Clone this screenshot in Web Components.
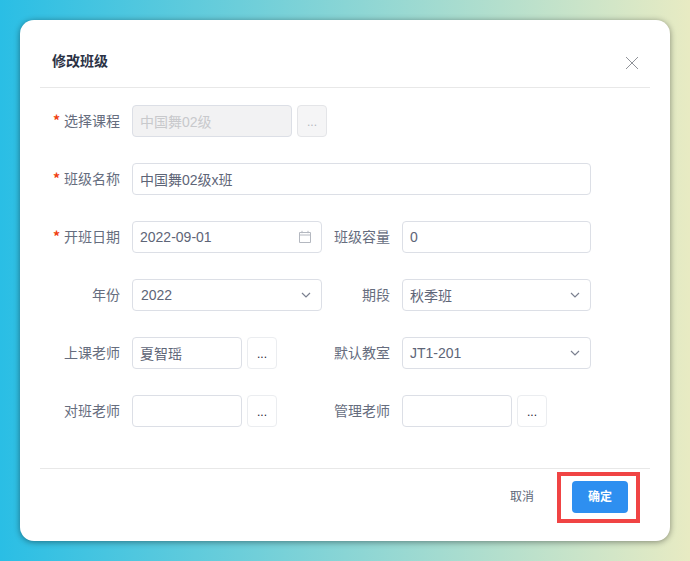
<!DOCTYPE html>
<html lang="zh"><head><meta charset="utf-8"><style>
html,body{margin:0;height:100%}
body{font-family:"Liberation Sans","Noto Sans CJK SC",sans-serif}
</style></head><body>
<x-app>
<x-dialog heading="修改班级">
  <x-row wide>
    <x-field label="选择课程" required><x-input value="中国舞02级" disabled w="160"></x-input><x-more disabled></x-more></x-field>
  </x-row>
  <x-row wide>
    <x-field label="班级名称" required><x-input value="中国舞02级x班" w="459"></x-input></x-field>
  </x-row>
  <x-row>
    <x-field label="开班日期" required><x-input value="2022-09-01" w="190" icon="date"></x-input></x-field>
    <x-field label="班级容量"><x-input value="0" w="189"></x-input></x-field>
  </x-row>
  <x-row>
    <x-field label="年份"><x-input value="2022" w="190" icon="down" select></x-input></x-field>
    <x-field label="期段"><x-input value="秋季班" w="189" icon="down"></x-input></x-field>
  </x-row>
  <x-row>
    <x-field label="上课老师"><x-input value="夏智瑶" w="110"></x-input><x-more></x-more></x-field>
    <x-field label="默认教室"><x-input value="JT1-201" w="189" icon="down"></x-input></x-field>
  </x-row>
  <x-row>
    <x-field label="对班老师"><x-input value="" w="110"></x-input><x-more></x-more></x-field>
    <x-field label="管理老师"><x-input value="" w="110"></x-input><x-more></x-more></x-field>
  </x-row>
  <x-action slot="footer" label="取消"></x-action>
  <x-action slot="footer" label="确定" primary highlight></x-action>
</x-dialog>
</x-app>
<script>
function def(name, css, html){
  customElements.define(name, class extends HTMLElement{
    connectedCallback(){
      if(this.shadowRoot) return;
      const r=this.attachShadow({mode:'open'});
      r.innerHTML='<style>'+css+'</style>'+(typeof html==='function'?html(this):html);
    }
  });
}
const esc=s=>(s||'').replace(/&/g,'&amp;').replace(/</g,'&lt;');
def('x-app',`:host{display:block;box-sizing:border-box;width:690px;height:561px;padding:20px;background:linear-gradient(90deg,#2abee5 0%,#89d5d5 50%,#e8ebc3 100%)}`,'<slot></slot>');
def('x-dialog',`
:host{display:flex;flex-direction:column;box-sizing:border-box;width:650px;height:521px;background:#fff;border-radius:14px;padding:0 20px;box-shadow:0 1px 6px rgba(0,0,0,.42)}
header{box-sizing:border-box;height:68px;border-bottom:1px solid #e8e8e8;display:flex;align-items:center;justify-content:space-between;padding:14px 11px 0 12px}
h2{margin:0;font-size:14px;font-weight:700;color:#2b3245;line-height:20px}
svg{display:block;position:relative;top:2px}
main{flex:1;display:flex;flex-direction:column;gap:26px;padding-top:17px}
footer{box-sizing:border-box;height:73px;border-top:1px solid #e8e8e8;display:flex;align-items:flex-start;justify-content:flex-end;padding:12px 22px 0 0;gap:38px}
`,t=>`<header><h2>${esc(t.getAttribute('heading'))}</h2><svg width="14" height="14" viewBox="0 0 14 14" fill="none" stroke="#909399" stroke-width="1"><path d="M1 1l12 12M13 1L1 13"/></svg></header><main><slot></slot></main><footer><slot name="footer"></slot></footer>`);
def('x-row',`:host{display:grid;grid-template-columns:270px 1fr;column-gap:0;height:32px}:host([wide]){grid-template-columns:1fr}`,'<slot></slot>');
def('x-field',`
:host{display:flex;align-items:center;height:32px}
label{flex:none;width:80px;margin-right:12px;text-align:right;font-size:14px;color:#666d7e;white-space:nowrap;line-height:32px}
i{font-style:normal;font-weight:700;line-height:0;color:#f0400f;margin-right:4px;font-family:"Noto Sans CJK SC",sans-serif}
.b{display:flex;gap:5px}
`,t=>`<label>${t.hasAttribute('required')?'<i>*</i>':''}${esc(t.getAttribute('label'))}</label><div class="b"><slot></slot></div>`);
def('x-input',`
:host{display:flex;align-items:center;justify-content:space-between;box-sizing:border-box;height:32px;border:1px solid #dcdfe6;border-radius:4px;background:#fff;padding:0 9px 0 7px;font-size:14px;color:#5e6577;white-space:nowrap}
:host([select]){padding-left:8px}
:host([disabled]){background:#f2f2f3;color:#c8c9cc}
svg{flex:none;display:block}
`,t=>{
  t.style.width=t.getAttribute('w')+'px';
  const ic=t.getAttribute('icon');
  let s='';
  if(ic==='date') s='<svg width="14" height="14" viewBox="0 0 14 14" fill="none" stroke="#b4b8c0"><path d="M1.500 2.500h11v10h-11zM1.500 5h11M4 .8v2.400M10 .8v2.400"/></svg>';
  if(ic==='down') s='<svg width="12" height="12" viewBox="0 0 12 12" fill="none" stroke="#7b8090" stroke-width="1.200"><path d="M2 4l4 4 4-4"/></svg>';
  return `<span>${esc(t.getAttribute('value'))}</span>${s}`;
});
def('x-more',`
:host{display:flex;align-items:center;justify-content:center;box-sizing:border-box;width:30px;height:32px;border:1px solid #ebedf0;border-radius:4px;background:#fff;font-size:12px;color:#1f2637;line-height:1}
:host([disabled]){background:#f5f5f6;color:#b4b8c0;border-color:#e4e5e8}
span{position:relative;top:1px}
`,'<span>...</span>');
def('x-action',`
:host{display:block;position:relative;font-size:12px;line-height:32px;height:32px;color:#606878}
:host([primary]){width:56px;text-align:center;background:#2e8ff0;border-radius:4px;color:#fff;font-weight:700}
:host([highlight])::after{content:"";position:absolute;left:-15px;top:-9px;width:83px;height:51px;box-sizing:border-box;border:4px solid #f04444}
`,t=>esc(t.getAttribute('label')));
</script>
</body></html>
